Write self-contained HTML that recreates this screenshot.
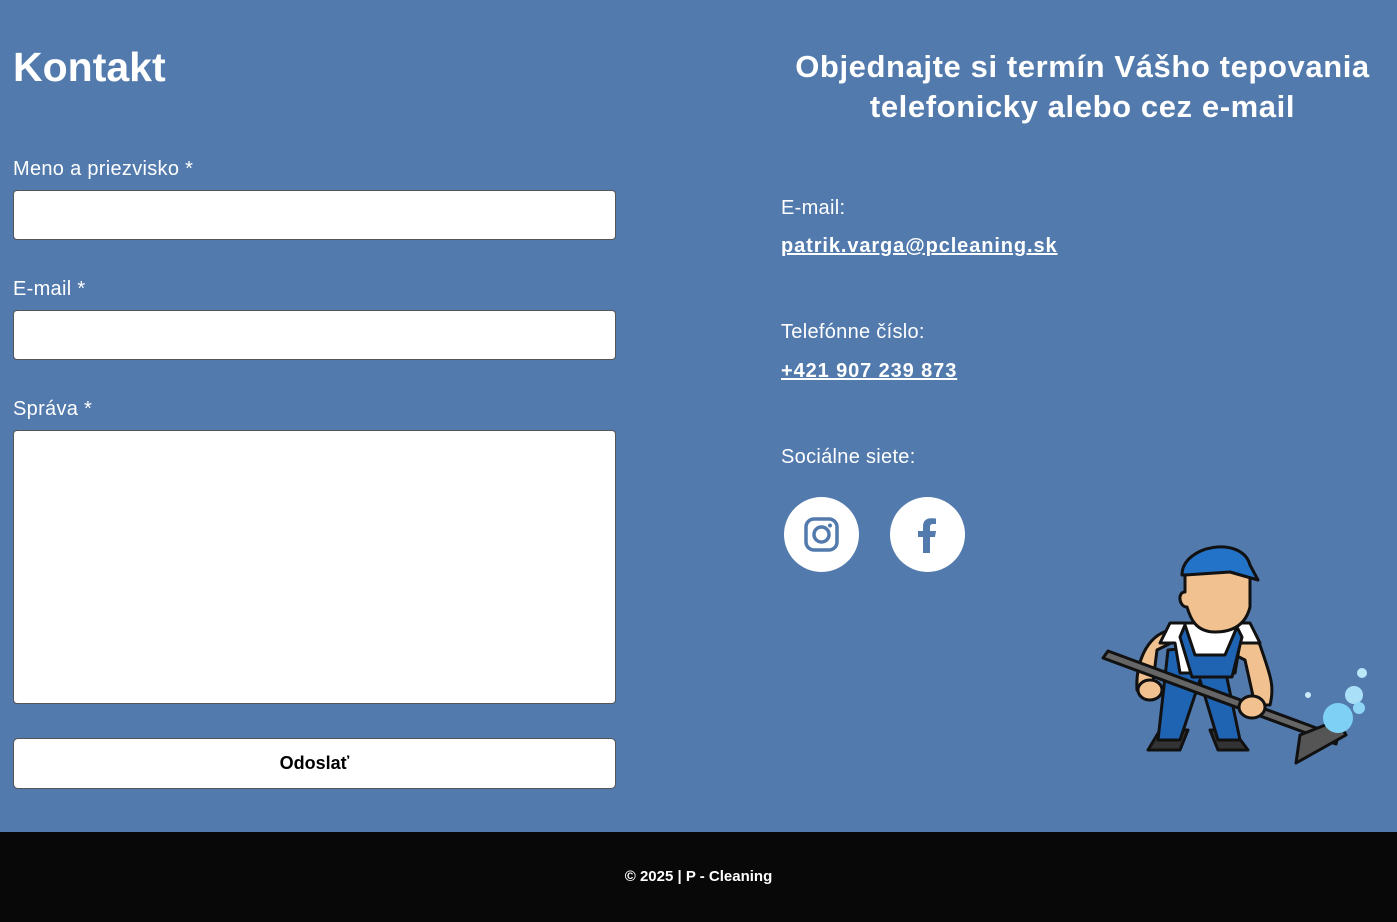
<!DOCTYPE html>
<html><head><meta charset="utf-8"><style>
*{margin:0;padding:0;box-sizing:border-box}
html,body{width:1397px;height:922px;overflow:hidden}
body{background:#527aad;font-family:"Liberation Sans",sans-serif;color:#fff;position:relative}
.a{position:absolute}
h1{position:absolute;left:13px;top:44px;font-size:41px;font-weight:bold;letter-spacing:0px}
h2{position:absolute;left:770px;width:625px;top:47px;text-align:center;font-size:31px;font-weight:bold;line-height:40px;letter-spacing:0.6px}
.lbl{position:absolute;left:13px;font-size:20px;letter-spacing:0.3px}
.in{position:absolute;left:13px;width:603px;background:#fff;border:1px solid #555;border-radius:4px}
.btn{position:absolute;left:13px;top:738px;width:603px;height:51px;background:#fff;border:1px solid #555;border-radius:5px;color:#000;font-weight:bold;font-size:18px;text-align:center;line-height:49px}
.r{position:absolute;left:781px;font-size:20px;letter-spacing:0.3px}
.lk{font-weight:bold;text-decoration:underline;letter-spacing:0.9px}
.c{position:absolute;top:497px;width:75px;height:75px;border-radius:50%;background:#fff}
footer{position:absolute;left:0;top:832px;width:1397px;height:90px;background:#080808;text-align:center;line-height:90px;font-size:15px;font-weight:bold}
</style></head><body>
<h1>Kontakt</h1>
<h2>Objednajte si termín Vášho tepovania telefonicky alebo cez e-mail</h2>
<div class="lbl" style="top:158px">Meno a priezvisko *</div>
<div class="in" style="top:190px;height:50px"></div>
<div class="lbl" style="top:278px">E-mail *</div>
<div class="in" style="top:310px;height:50px"></div>
<div class="lbl" style="top:398px">Správa *</div>
<div class="in" style="top:430px;height:274px"></div>
<div class="btn">Odoslať</div>
<div class="r" style="top:197px">E-mail:</div>
<div class="r lk" style="top:235px">patrik.varga@pcleaning.sk</div>
<div class="r" style="top:321px">Telefónne číslo:</div>
<div class="r lk" style="top:360px">+421 907 239 873</div>
<div class="r" style="top:446px">Sociálne siete:</div>
<div class="c" style="left:784px"><svg width="75" height="75" viewBox="0 0 75 75"><rect x="22" y="22" width="31" height="31" rx="8" fill="none" stroke="#527aad" stroke-width="3.5"/><circle cx="37.5" cy="37.5" r="7.5" fill="none" stroke="#527aad" stroke-width="3.5"/><circle cx="46" cy="28.5" r="2" fill="#527aad"/></svg></div>
<div class="c" style="left:890px"><svg width="75" height="75" viewBox="0 0 75 75"><path d="M40 56V40h5l1-6h-6v-4c0-2 1-3 3-3h3v-5.5c-1 0-3-.3-5-.3-5 0-8 3-8 8V34h-5v6h5v16z" fill="#527aad"/></svg></div>
<svg class="a" style="left:1090px;top:530px" width="300" height="240" viewBox="0 0 300 240">
<g stroke="#111" stroke-width="3" stroke-linejoin="round">
<path d="M70 200l-12 20h32l8-20zM120 200l8 20h30l-15-20z" fill="#333"/>
<path d="M78 120l-10 90h22l20-60 18 60h22l-20-95z" fill="#1f63b3"/>
<path d="M85 100c-25 0-40 30-38 60l15 0 5-40 30-15z" fill="#f1c18f"/>
<path d="M85 95l70 0 15 20c10 30 15 40 10 60l-15 0-10-45z" fill="#f1c18f"/>
<path d="M80 93h80l10 20h-20l-5 30h-55l-5-30h-15z" fill="#fff"/>
<path d="M95 95l10 30h30l12-28 5 10-10 40h-40l-12-40z" fill="#1f63b3"/>
<path d="M95 42c0-20 65-20 65 5l0 30c-5 20-20 25-35 25-20 0-25-15-28-25-8 0-10-15-2-15z" fill="#f1c18f"/>
<path d="M92 45c0-30 60-40 68-10l8 15-28-8-45 3z" fill="#2373c9"/>
<path d="M13 128l5-7 230 85-2 8z" fill="#666"/>
<path d="M210 205l38-15 8 15-50 28z" fill="#555"/>
<ellipse cx="60" cy="160" rx="12" ry="10" fill="#f1c18f"/>
<ellipse cx="162" cy="177" rx="13" ry="11" fill="#f1c18f"/>
</g>
<circle cx="248" cy="188" r="15" fill="#7fd0f5"/><circle cx="264" cy="165" r="9" fill="#a9e0f8"/><circle cx="269" cy="178" r="6" fill="#8fd6f6"/><circle cx="272" cy="143" r="5" fill="#bbe7f9"/><circle cx="218" cy="165" r="3" fill="#cdebfa"/>
</svg>
<footer>© 2025 | P - Cleaning</footer>
</body></html>
